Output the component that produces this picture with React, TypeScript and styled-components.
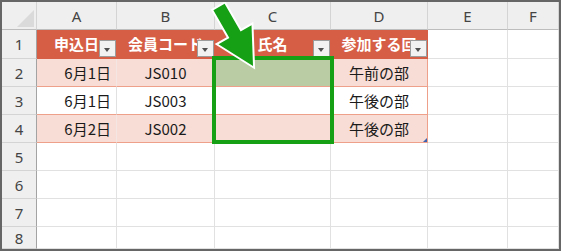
import React from "react";
import styled, { createGlobalStyle, css } from "styled-components";

const GlobalStyle = createGlobalStyle`
  html, body {
    margin: 0;
    padding: 0;
    background: #ffffff;
  }
  body {
    font-family: "Noto Sans CJK JP", "Noto Sans", sans-serif;
  }
`;

const HEAD_RED = "#d65e45";
const BAND_PINK = "#f7ddd5";
const BAND_LINE = "#efa08b";
const GRID_LINE = "#e1e1e1";
const MARK_GREEN = "#15a015";

type Tone = "sheet" | "head" | "band" | "plain" | "pick";
type Align = "left" | "center" | "right";

interface Entry {
  date: string;
  member: string;
  session: string;
  tone: Tone;
}

const COLUMNS = ["A", "B", "C", "D", "E", "F"];
const HEADERS = ["申込日", "会員コード", "氏名", "参加する回"];

const ENTRIES: Entry[] = [
  { date: "6月1日", member: "JS010", session: "午前の部", tone: "band" },
  { date: "6月1日", member: "JS003", session: "午後の部", tone: "plain" },
  { date: "6月2日", member: "JS002", session: "午後の部", tone: "band" },
];

const EMPTY_ROWS = [5, 6, 7, 8];

export default function App() {
  return (
    <>
      <GlobalStyle />
      <Frame>
        <Sheet>
          <Corner />
          {COLUMNS.map((col) => (
            <ColHead key={col}>{col}</ColHead>
          ))}

          <RowHead>1</RowHead>
          {HEADERS.map((title, i) => (
            <Cell key={title} $tone="head" $last={i === HEADERS.length - 1}>
              <HeadLabel>{title}</HeadLabel>
              <FilterButton />
            </Cell>
          ))}
          <Cell $tone="sheet" />
          <Cell $tone="sheet" />

          {ENTRIES.map((entry, i) => (
            <React.Fragment key={i}>
              <RowHead>{i + 2}</RowHead>
              <Cell $tone={entry.tone} $align="right">
                {entry.date}
              </Cell>
              <Cell $tone={entry.tone}>{entry.member}</Cell>
              {i === 0 ? (
                <Cell $tone="pick">
                  {/* green frame around C2:C4 */}
                  <Highlight />
                </Cell>
              ) : (
                <Cell $tone={entry.tone} />
              )}
              <Cell
                $tone={entry.tone}
                $last
                $handle={i === ENTRIES.length - 1}
              >
                {entry.session}
              </Cell>
              <Cell $tone="sheet" />
              <Cell $tone="sheet" />
            </React.Fragment>
          ))}

          {EMPTY_ROWS.map((n) => (
            <React.Fragment key={n}>
              <RowHead>{n}</RowHead>
              {COLUMNS.map((col) => (
                <Cell key={col} $tone="sheet" />
              ))}
            </React.Fragment>
          ))}
        </Sheet>

        <Pointer viewBox="205 0 58 72" width={58} height={72}>
          <polygon
            points="224.6,3.8 240.6,31.5 251.5,25.2 253,65.9 218.5,44.2 229.4,38 213.4,10.3"
            fill={MARK_GREEN}
            stroke="#ffffff"
            strokeWidth={4}
            strokeLinejoin="miter"
            paintOrder="stroke"
          />
        </Pointer>
      </Frame>
    </>
  );
}

const Frame = styled.div`
  position: relative;
  width: 561px;
  height: 251px;
  box-sizing: border-box;
  border: 2px solid #666666;
  overflow: hidden;
  background: #ffffff;
`;

const Sheet = styled.div`
  display: grid;
  grid-template-columns: 35px 80px 98px 116px 97px 80px 1fr;
  grid-template-rows: 28px 29px repeat(6, 28px) 1fr;
  width: 100%;
  height: 100%;
  font-size: 15px;
  color: #1a1a1a;
`;

const headerText = css`
  display: flex;
  align-items: center;
  justify-content: center;
  box-sizing: border-box;
  background: #efefef;
  color: #444444;
  font-family: "Noto Sans", "Open Sans", sans-serif;
  font-size: 15px;
`;

const Corner = styled.div`
  ${headerText};
  position: relative;
  border-right: 1px solid #d4d4d4;
  border-bottom: 1px solid #bdbdbd;

  &::after {
    content: "";
    position: absolute;
    right: 2px;
    bottom: 2px;
    width: 17px;
    height: 17px;
    background: #dadada;
    clip-path: polygon(100% 0, 100% 100%, 0 100%);
  }
`;

const ColHead = styled.div`
  ${headerText};
  border-right: 1px solid #d4d4d4;
  border-bottom: 1px solid #bdbdbd;
`;

const RowHead = styled.div`
  ${headerText};
  border-right: 1px solid #a3a3a3;
  border-bottom: 1px solid #d4d4d4;
`;

const toneStyles: Record<Tone, ReturnType<typeof css>> = {
  sheet: css`
    background: #ffffff;
    border-right-color: ${GRID_LINE};
    border-bottom-color: ${GRID_LINE};
  `,
  head: css`
    background: ${HEAD_RED};
    border-right-color: ${HEAD_RED};
    border-bottom-color: ${HEAD_RED};
    color: #ffffff;
    font-weight: 700;
  `,
  band: css`
    background: ${BAND_PINK};
    border-right-color: #f4e6e2;
    border-bottom-color: ${BAND_LINE};
  `,
  plain: css`
    background: #ffffff;
    border-right-color: ${GRID_LINE};
    border-bottom-color: ${BAND_LINE};
  `,
  pick: css`
    background: #b9cca4;
    border-right-color: #b9cca4;
    border-bottom-color: ${BAND_LINE};
    overflow: visible;
  `,
};

const Cell = styled.div<{
  $tone: Tone;
  $align?: Align;
  $last?: boolean;
  $handle?: boolean;
}>`
  position: relative;
  display: flex;
  align-items: center;
  justify-content: ${({ $align }) =>
    $align === "right" ? "flex-end" : $align === "left" ? "flex-start" : "center"};
  padding: 0 ${({ $align }) => ($align === "right" ? "5px" : "0")};
  box-sizing: border-box;
  overflow: hidden;
  white-space: nowrap;
  border-right: 1px solid;
  border-bottom: 1px solid;
  ${({ $tone }) => toneStyles[$tone]};
  ${({ $last, $tone }) =>
    $last &&
    $tone !== "head" &&
    css`
      border-right-color: ${BAND_LINE};
    `};

  ${({ $handle }) =>
    $handle &&
    css`
      &::after {
        content: "";
        position: absolute;
        right: 0;
        bottom: 0;
        width: 4px;
        height: 4px;
        background: #3d63b0;
        clip-path: polygon(100% 0, 100% 100%, 0 100%);
      }
    `};
`;

const HeadLabel = styled.span`
  padding-bottom: 2px;
`;

const FilterButton = styled.span`
  position: absolute;
  right: 0;
  bottom: 1px;
  width: 17px;
  height: 17px;
  box-sizing: border-box;
  border: 1px solid #9c9c9c;
  background: #f2f2f2;

  &::after {
    content: "";
    position: absolute;
    left: 4px;
    top: 7px;
    border-left: 3.5px solid transparent;
    border-right: 3.5px solid transparent;
    border-top: 4px solid #505050;
  }
`;

const Highlight = styled.div`
  position: absolute;
  left: -3px;
  top: -3px;
  width: 122px;
  height: 88px;
  box-sizing: border-box;
  border: 4px solid ${MARK_GREEN};
  z-index: 2;
  pointer-events: none;
`;

const Pointer = styled.svg`
  position: absolute;
  left: 203px;
  top: -2px;
  z-index: 3;
  overflow: visible;
  pointer-events: none;
`;
